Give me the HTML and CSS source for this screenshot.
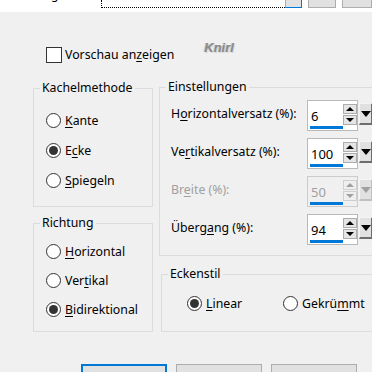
FILE: index.html
```html
<!DOCTYPE html>
<html lang="de">
<head>
<meta charset="utf-8">
<link rel="stylesheet" href="styles.css">
</head>
<body>
<div class="topbar">
  <span class="cut-g">g</span>
  <div class="dotted"></div>
  <div class="tb-btn tb-blue"></div>
  <div class="tb-btn tb-wide"></div>
  <div class="tb-btn tb-wide"></div>
</div>
<div class="main">
  <div class="preview-row">
    <label class="check"><span class="box"></span>Vorschau an<u>z</u>eigen</label>
    <span class="knirl">Knirl</span>
  </div>
  <div class="cols">
    <div class="col-left">
      <fieldset class="grp kachel">
        <legend>Kachelmethode</legend>
        <div class="radio"><span class="dot"></span><span><u>K</u>ante</span></div>
        <div class="radio"><span class="dot on"></span><span>E<u>c</u>ke</span></div>
        <div class="radio"><span class="dot"></span><span><u>S</u>piegeln</span></div>
      </fieldset>
      <fieldset class="grp richtung">
        <legend>Richtung</legend>
        <div class="radio"><span class="dot"></span><span><u>H</u>orizontal</span></div>
        <div class="radio"><span class="dot"></span><span>Ver<u>t</u>ikal</span></div>
        <div class="radio"><span class="dot on"></span><span><u>B</u>idirektional</span></div>
      </fieldset>
    </div>
    <div class="col-right">
      <fieldset class="grp settings">
        <legend>Einstellungen</legend>
        <div class="row">
          <span class="lbl">H<u>o</u>rizontalversatz (%):</span>
          <div class="spinner">
            <div class="spinwrap"><div class="field"><span class="val">6</span></div><div class="spin"><span class="sbtn up"></span><span class="sbtn down"></span></div></div>
            <div class="drop"></div>
          </div>
        </div>
        <div class="row">
          <span class="lbl">Ve<u>r</u>tikalversatz (%):</span>
          <div class="spinner">
            <div class="spinwrap"><div class="field"><span class="val">100</span></div><div class="spin"><span class="sbtn up"></span><span class="sbtn down"></span></div></div>
            <div class="drop"></div>
          </div>
        </div>
        <div class="row disabled">
          <span class="lbl">Br<u>e</u>ite (%):</span>
          <div class="spinner">
            <div class="spinwrap"><div class="field"><span class="val">50</span></div><div class="spin"><span class="sbtn up"></span><span class="sbtn down"></span></div></div>
            <div class="drop"></div>
          </div>
        </div>
        <div class="row">
          <span class="lbl">Überg<u>a</u>ng (%):</span>
          <div class="spinner">
            <div class="spinwrap"><div class="field"><span class="val">94</span></div><div class="spin"><span class="sbtn up"></span><span class="sbtn down"></span></div></div>
            <div class="drop"></div>
          </div>
        </div>
      </fieldset>
      <fieldset class="grp ecken">
        <legend>Eckenstil</legend>
        <div class="radio-line">
          <div class="radio"><span class="dot on"></span><span><u>L</u>inear</span></div>
          <div class="radio"><span class="dot"></span><span>Gekrü<u>m</u>mt</span></div>
        </div>
      </fieldset>
    </div>
  </div>
  <div class="buttons">
    <div class="btn btn-default"></div>
    <div class="btn"></div>
    <div class="btn"></div>
  </div>
</div>
</body>
</html>
```
FILE: styles.css
```css
html, body {
  margin: 0;
  padding: 0;
  width: 372px;
  height: 372px;
  overflow: hidden;
  background: #f0f0f0;
  font-family: "Noto Sans", "Open Sans", sans-serif;
  font-size: 12.3px;
  color: #000;
}
u { text-decoration: underline; text-underline-offset: 2px; text-decoration-thickness: 1px; }

.topbar {
  height: 12px;
  background: #fff;
  display: flex;
  align-items: flex-start;
  overflow: hidden;
}
.cut-g {
  margin-left: 51px;
  margin-top: -12px;
  line-height: 14px;
  font-size: 12px;
  width: 53px;
}
.dotted {
  width: 192px;
  height: 7px;
  border-left: 1px dotted #000;
  border-bottom: 1px dotted #000;
}
.tb-btn {
  height: 7px;
  background: #e1e1e1;
  border: 1px solid #adadad;
  border-top: none;
}
.tb-blue {
  width: 16px;
  border-right-color: #0078d7;
  border-bottom-color: #0078d7;
}
.tb-wide { width: 27px; margin-left: 6px; }
.tb-wide:last-child { width: 30px; margin-left: 6px; }

.main { padding-left: 33px; }

.preview-row {
  height: 40px;
  margin-top: 28px;
  display: flex;
  align-items: flex-start;
}
.check {
  display: flex;
  align-items: center;
  margin-top: 6px;
  margin-left: 13px;
  line-height: 18px;
}
.box {
  width: 14px;
  height: 14px;
  border: 1px solid #333;
  background: #fff;
  margin-right: 3px;
}
.knirl {
  margin-left: 30px;
  margin-top: 1px;
  font-family: "Liberation Sans", sans-serif;
  font-style: italic;
  font-weight: bold;
  font-size: 13px;
  line-height: 14px;
  color: #8a8a8a;
  text-shadow: 1px 1px 0 #d6d6d6, -1px 0 0 #cdcdcd;
}

.cols {
  display: grid;
  grid-template-columns: 120px 230px;
  column-gap: 6px;
  align-items: start;
}

.grp {
  margin: 0;
  border: 1px solid #dcdcdc;
  min-width: 0;
}
.grp legend {
  padding: 0 2px;
  line-height: 16px;
}

.kachel { padding: 9px 0 11px 12px; }
.kachel legend { margin-left: -6px; }
.kachel .radio { height: 30px; }

.richtung { margin-top: 8px; padding: 6px 0 7px 12px; }
.richtung legend { margin-left: -6px; }
.richtung .radio { height: 29px; }

.radio {
  display: flex;
  align-items: center;
}
.dot {
  width: 13px;
  height: 13px;
  border: 1px solid #333;
  border-radius: 50%;
  background: #fff;
  margin-right: 4px;
  display: flex;
  align-items: center;
  justify-content: center;
  flex: none;
}
.dot.on::after {
  content: "";
  width: 9px;
  height: 9px;
  border-radius: 50%;
  background: #333;
}

.col-right { margin-top: -1px; }
.settings { padding: 5px 0 10px 11px; }
.settings legend { margin-left: -5px; }
.row {
  display: flex;
  align-items: center;
  height: 31px;
}
.row + .row { margin-top: 7px; }
.lbl { width: 136px; padding-bottom: 4px; }

.spinner { display: flex; align-items: flex-start; height: 31px; }
.spinwrap {
  display: flex;
  width: 49px;
  height: 29px;
  border: 1px solid #b9b9b9;
  background: #fff;
}
.field {
  flex: 1;
  display: flex;
  flex-direction: column;
  justify-content: flex-end;
  padding: 0 0 1px 2px;
}
.val {
  display: block;
  line-height: 19px;
  font-size: 13px;
  padding-left: 1px;
  border-bottom: 3px solid #0078d7;
}
.spin {
  width: 14px;
  display: flex;
  flex-direction: column;
  gap: 1px;
  padding-top: 3px;
}
.sbtn {
  height: 8px;
  width: 12px;
  border: 1px solid #adadad;
  background: #e5e5e5;
  display: flex;
  align-items: center;
  justify-content: center;
}
.sbtn::after {
  content: "";
  border-left: 4px solid transparent;
  border-right: 4px solid transparent;
}
.up::after { border-bottom: 4px solid #000; }
.down::after { border-top: 4px solid #000; }
.drop {
  margin-top: 3px;
  margin-left: 1px;
  width: 14px;
  height: 22px;
  background: #e1e1e1;
  border-top: 1px solid #f4f4f4;
  border-left: 1px solid #f4f4f4;
  border-right: 2px solid #6d6d6d;
  border-bottom: 2px solid #6d6d6d;
  display: flex;
  justify-content: center;
  padding-top: 7px;
  box-sizing: border-box;
}
.drop::after {
  content: "";
  height: 0;
  border-left: 5px solid transparent;
  border-right: 5px solid transparent;
  border-top: 6px solid #000;
}
.disabled .lbl, .disabled .val { color: #a0a0a0; }
.disabled .spinwrap { background: #f0f0f0; border-color: #cccccc; }
.disabled .sbtn { border-color: #cfcfcf; background: #efefef; }
.disabled .up::after { border-bottom-color: #a0a0a0; }
.disabled .down::after { border-top-color: #a0a0a0; }
.disabled .drop { border-right-color: #c0c0c0; border-bottom-color: #c0c0c0; }
.disabled .drop::after { border-top-color: #a0a0a0; }

.ecken { margin: 10px 0 0 2px; padding: 6px 0 13px 25px; }
.ecken legend { margin-left: -19px; }
.radio-line { display: flex; height: 30px; }
.radio-line .radio:first-child { width: 96px; }

.buttons {
  display: flex;
  gap: 9px;
  margin-top: 32px;
  margin-left: 48px;
}
.btn {
  width: 86px;
  height: 23px;
  box-sizing: border-box;
  background: #e1e1e1;
  border: 1px solid #adadad;
}
.btn-default { border: 2px solid #0078d7; }
```
